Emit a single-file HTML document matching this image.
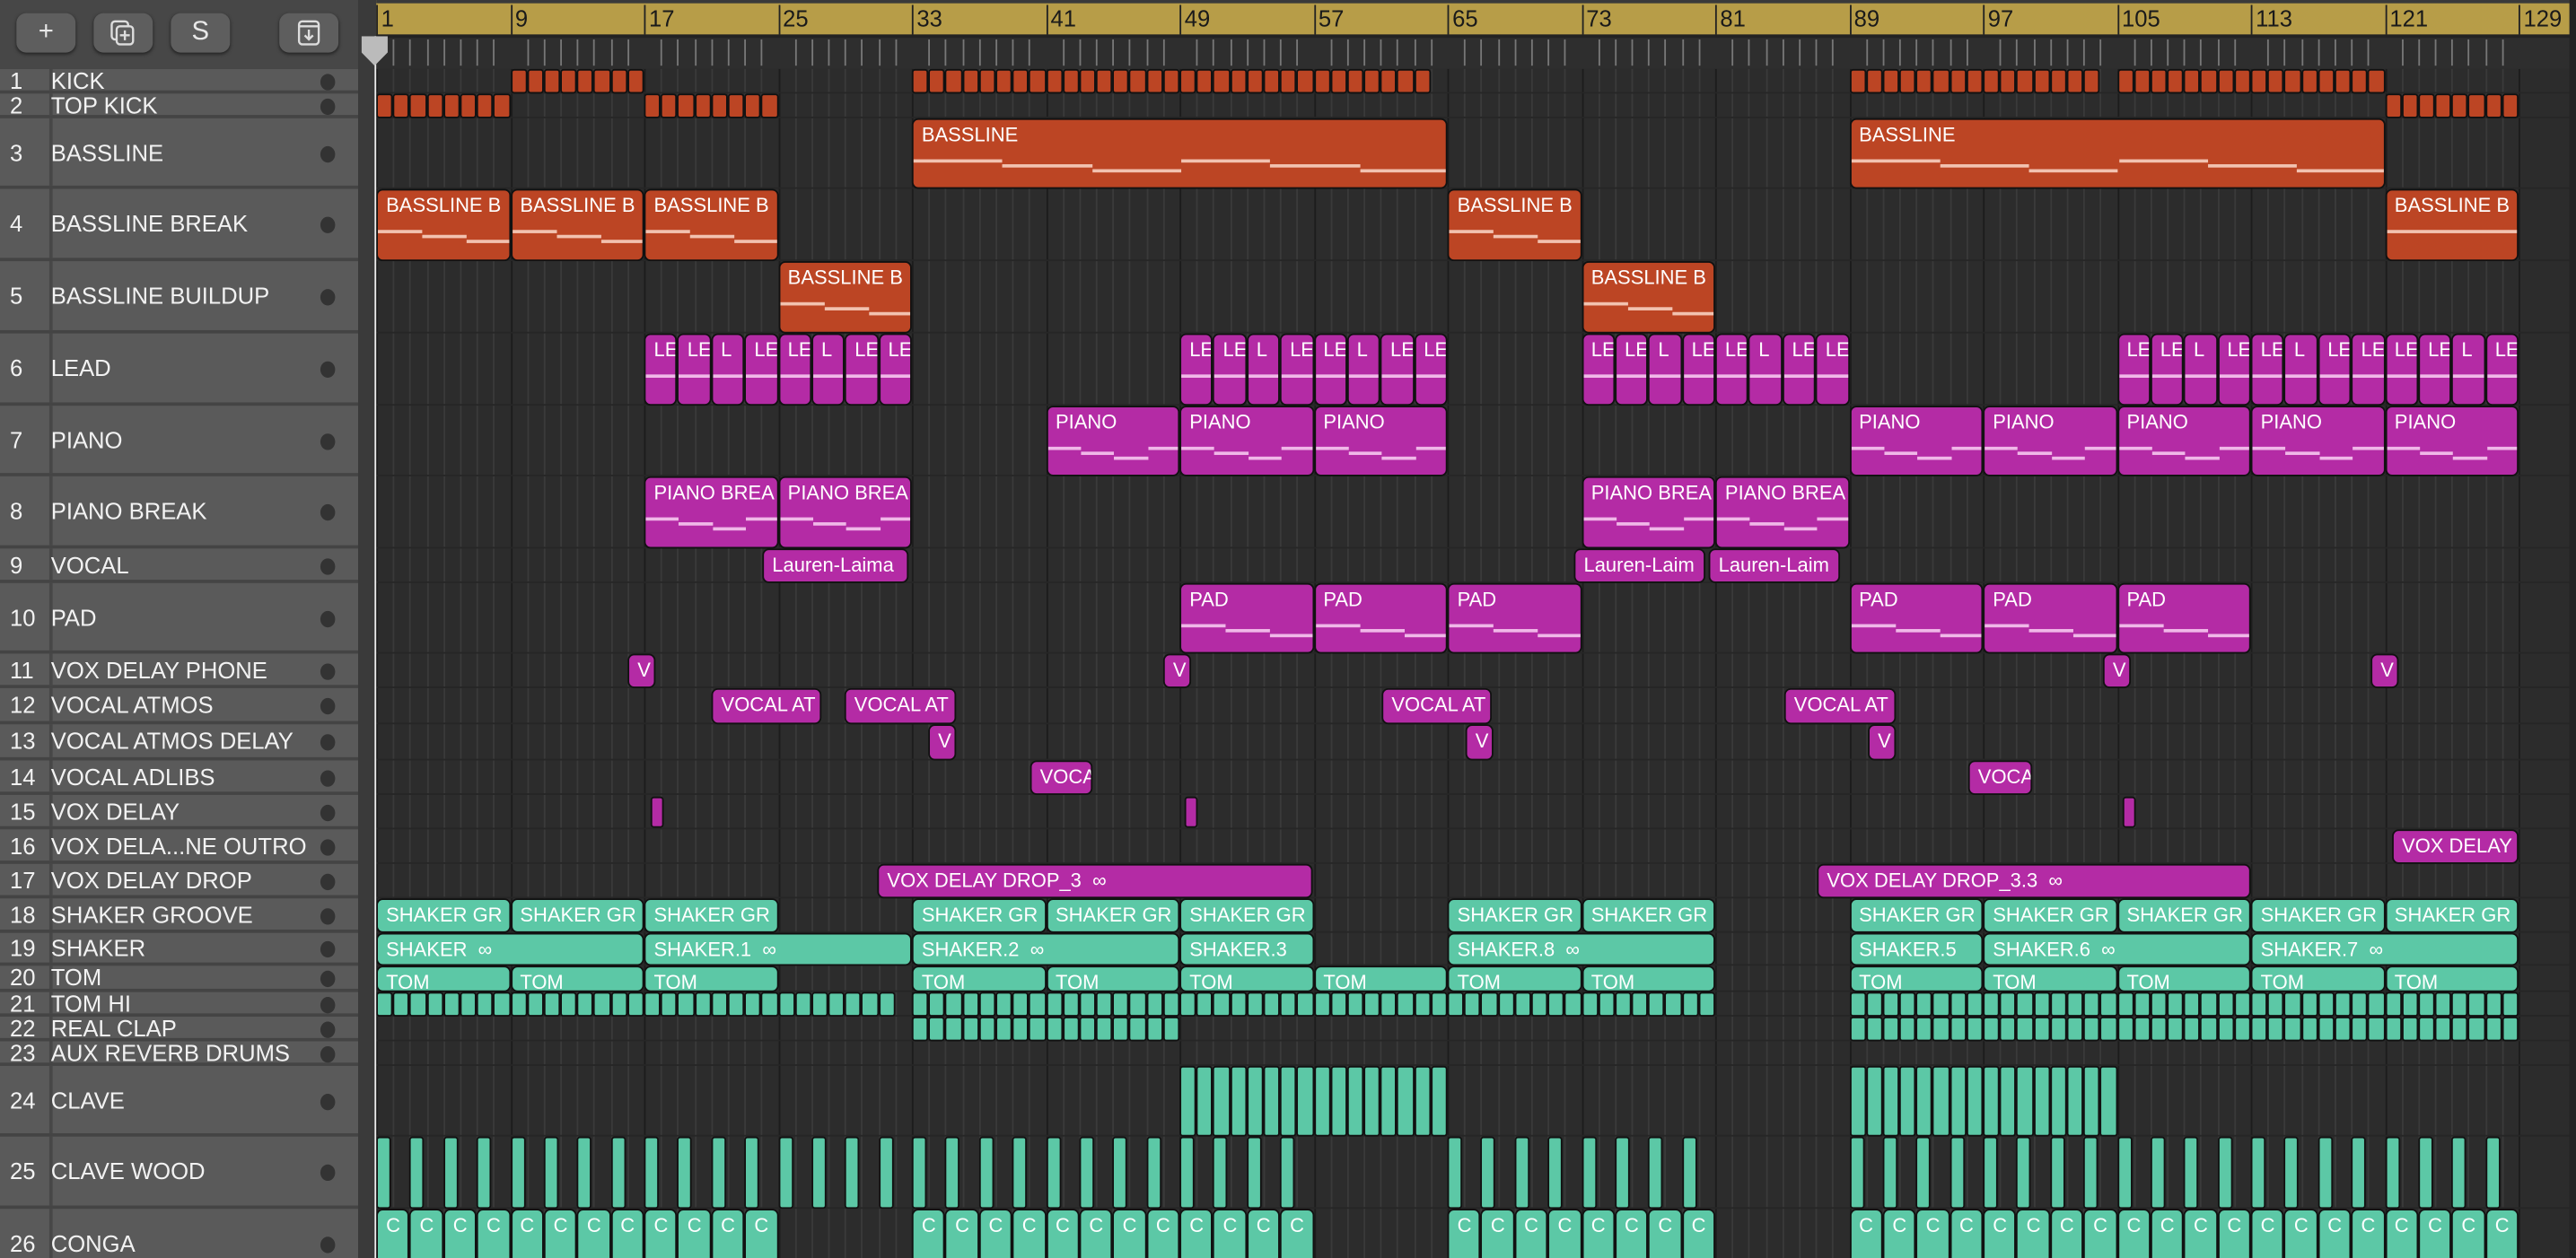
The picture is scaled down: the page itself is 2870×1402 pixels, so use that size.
<!DOCTYPE html>
<html><head><meta charset="utf-8">
<style>
html,body{margin:0;padding:0;width:2870px;height:1402px;overflow:hidden;background:#2b2b2b}
#s{position:absolute;left:0;top:0;width:1568px;height:766px;transform:scale(1.8304);transform-origin:0 0;font-family:"Liberation Sans",sans-serif;overflow:hidden;background:#2c2c2c}
.abs{position:absolute}
.btn{position:absolute;top:8px;width:36px;height:24px;border-radius:6px;background:#5e5e5e;box-shadow:0 1px 2px #222;color:#e8e8e8;text-align:center;font-size:16px;line-height:24px}
.trk{position:absolute;left:0;width:218px;background:#5a5a5a;border-bottom:2px solid #444;box-sizing:border-box;color:#f2f2f2;font-size:14px}
.trk .n{position:absolute;left:6px}
.trk .t{position:absolute;left:31px}
.trk .d{position:absolute;left:195px;width:9px;height:10px;border-radius:50%;background:#333}
.r{position:absolute;box-sizing:border-box;border:1px solid #111;border-radius:4px;color:#fff;font-size:12px;overflow:hidden;white-space:nowrap;padding:2px 0 0 5px;line-height:14px}
.o{background:#bc4524}.m{background:#b42ba5}.g{background:#5cc8a6}
.nl{position:absolute;height:2px}
</style></head><body><div id="s">
<div class="abs" style="left:0;top:0;width:220px;height:42px;background:#474747"></div>
<div class="btn" style="left:10px">+</div>
<div class="btn" style="left:57px"><svg width="20" height="18" viewBox="0 0 20 18" style="margin-top:3px"><rect x="3" y="2" width="10" height="11" rx="2" fill="none" stroke="#ddd" stroke-width="1.3"/><rect x="6" y="5" width="10" height="11" rx="2" fill="#5e5e5e" stroke="#ddd" stroke-width="1.3"/><path d="M11 7.5v6M8 10.5h6" stroke="#ddd" stroke-width="1.3"/></svg></div>
<div class="btn" style="left:104px">S</div>
<div class="btn" style="left:170px"><svg width="18" height="18" viewBox="0 0 18 18" style="margin-top:3px"><rect x="3" y="2" width="12" height="14" rx="2" fill="none" stroke="#ddd" stroke-width="1.3"/><path d="M3 5h12M9 7v6M6.5 10.5L9 13l2.5-2.5" fill="none" stroke="#ddd" stroke-width="1.3"/></svg></div>
<div class="abs" style="left:218px;top:0;width:11px;height:766px;background:#3a3a3a"></div>
<div class="abs" style="left:229px;top:0;width:1335px;height:21px;background:#b79d48;border-top:2px solid #3a3a3a;box-sizing:border-box"></div>
<div class="abs" style="left:229px;top:21px;width:1335px;height:21px;background:#2e2e2e;border-top:2px solid #222;box-sizing:border-box"></div>
<div class="abs" style="left:1564px;top:0;width:4px;height:766px;background:#222"></div>
<div id="g"></div>
<div class="abs" style="left:228px;top:22px;width:1px;height:744px;background:#eee"></div>
<div class="abs" style="left:220px;top:22px;width:16px;height:18px;background:#bbb;clip-path:polygon(0 0,100% 0,100% 55%,50% 100%,0 55%)"></div>
</div>
<script>
var s=document.getElementById('s'),h='';
function X(b){return 229+(b-1)*10.1875}
var rows=[[42,57,'KICK'],[57,72,'TOP KICK'],[72,115,'BASSLINE'],[115,159,'BASSLINE BREAK'],[159,203,'BASSLINE BUILDUP'],[203,247,'LEAD'],[247,290,'PIANO'],[290,334,'PIANO BREAK'],[334,355,'VOCAL'],[355,398,'PAD'],[398,419,'VOX DELAY PHONE'],[419,441,'VOCAL ATMOS'],[441,463,'VOCAL ATMOS DELAY'],[463,484,'VOCAL ADLIBS'],[484,505,'VOX DELAY'],[505,526,'VOX DELA...NE OUTRO'],[526,547,'VOX DELAY DROP'],[547,568,'SHAKER GROOVE'],[568,588,'SHAKER'],[588,604,'TOM'],[604,619,'TOM HI'],[619,634,'REAL CLAP'],[634,649,'AUX REVERB DRUMS'],[649,692,'CLAVE'],[692,736,'CLAVE WOOD'],[736,780,'CONGA']];
for(var b=1;b<=129;b++){var x=X(b);var c=(b-1)%8==0?'#1c1c1c':'#3a3a3a';
h+='<div class="abs" style="left:'+x+'px;top:42px;width:1px;height:724px;background:'+c+'"></div>';
h+='<div class="abs" style="left:'+x+'px;top:'+((b-1)%8==0?3:24)+'px;width:1px;height:'+((b-1)%8==0?18:16)+'px;background:'+((b-1)%8==0?'#222':'#777')+'"></div>';
if((b-1)%8==0)h+='<div class="abs" style="left:'+(x+3)+'px;top:3px;font-size:14px;color:#1a1a1a">'+b+'</div>';}
rows.forEach(function(r,i){var y=r[0],hh=r[1]-r[0];
h+='<div class="abs" style="left:229px;top:'+(r[1]-1)+'px;width:1335px;height:1px;background:#262626"></div>';
h+='<div class="trk" style="top:'+y+'px;height:'+hh+'px"><div class="abs" style="left:30px;top:0;width:2px;height:100%;background:#474747"></div><span class="n" style="top:'+(hh/2-9)+'px">'+(i+1)+'</span><span class="t" style="top:'+(hh/2-9)+'px">'+r[2]+'</span><span class="d" style="top:'+(hh/2-5)+'px"></span></div>';});
function R(t,x1,x2,cl,lab,notes){var r=rows[t-1];var w=x2-x1;
var o='<div class="r '+cl+'" style="left:'+x1+'px;top:'+r[0]+'px;width:'+w+'px;height:'+(r[1]-r[0])+'px'+(w<14?';border-radius:2px;padding:0':'')+'">'+(lab||'');
if(notes){var nc=cl=='o'?'#f2c2b0':'#f0b8e8';var hh=r[1]-r[0];for(var k=0;k<notes;k++){var nx=k*w/notes,nw=w/notes;o+='<div class="nl" style="left:'+nx+'px;width:'+nw+'px;top:'+(hh*0.62+((k*7)%3)*3-3)+'px;background:'+nc+'"></div>';}}
o+='</div>';h+=o;}
function B(t,b1,b2,cl,lab,n,notes){var step=(b2-b1)/n;for(var k=0;k<n;k++){var l=typeof lab=='object'?lab[k%lab.length]:lab;R(t,X(b1+k*step),X(b1+(k+1)*step),cl,l,notes);}}
B(1,9,17,'o','',8);B(1,33,49,'o','',16);B(1,49,64,'o','',15);B(1,89,104,'o','',15);B(1,105,121,'o','',16);
B(2,1,9,'o','',8);B(2,17,25,'o','',8);B(2,121,129,'o','',8);
R(3,X(33),X(65),'o','BASSLINE',6);R(3,X(89),X(121),'o','BASSLINE',6);
B(4,1,25,'o','BASSLINE B',3,3);R(4,X(65),X(73),'o','BASSLINE B',3);R(4,X(121),X(129),'o','BASSLINE B',1);
R(5,X(25),X(33),'o','BASSLINE B',3);R(5,X(73),X(81),'o','BASSLINE B',3);
var le=['LE','LE','L','LE','LE','L','LE','LE'];
B(6,17,33,'m',le,8,1);B(6,49,65,'m',le,8,1);B(6,73,89,'m',le,8,1);B(6,105,129,'m',le,12,1);
B(7,41,65,'m','PIANO',3,4);B(7,89,129,'m','PIANO',5,4);
B(8,17,33,'m','PIANO BREA',2,4);B(8,73,89,'m','PIANO BREA',2,4);
R(9,464,553,'m','Lauren-Laima');R(9,958,1038,'m','Lauren-Laim');R(9,1040,1120,'m','Lauren-Laim');
B(10,49,73,'m','PAD',3,3);B(10,89,113,'m','PAD',3,3);
[382,708,1280,1443].forEach(function(x){R(11,x,x+17,'m','V')});
[[433,500],[514,582],[841,908],[1086,1154]].forEach(function(a){R(12,a[0],a[1],'m','VOCAL AT')});
[565,892,1137].forEach(function(x){R(13,x,x+17,'m','V')});
R(14,627,665,'m','VOCA');R(14,1198,1237,'m','VOCA');
[396,721,1292].forEach(function(x){var r=rows[14];h+='<div class="r m" style="left:'+x+'px;top:'+(r[0]+1)+'px;width:8px;height:19px;padding:0;border-radius:2px"></div>'});
R(16,1456,1533,'m','VOX DELAY');
R(17,534,799,'m','VOX DELAY DROP_3 &nbsp;&#x221E;');R(17,1106,1370,'m','VOX DELAY DROP_3.3 &nbsp;&#x221E;');
B(18,1,25,'g','SHAKER GR',3);B(18,33,57,'g','SHAKER GR',3);B(18,65,81,'g','SHAKER GR',2);B(18,89,129,'g','SHAKER GR',5);
R(19,X(1),X(17),'g','SHAKER &nbsp;&#x221E;');R(19,X(17),X(33),'g','SHAKER.1 &nbsp;&#x221E;');R(19,X(33),X(49),'g','SHAKER.2 &nbsp;&#x221E;');R(19,X(49),X(57),'g','SHAKER.3');R(19,X(65),X(81),'g','SHAKER.8 &nbsp;&#x221E;');R(19,X(89),X(97),'g','SHAKER.5');R(19,X(97),X(113),'g','SHAKER.6 &nbsp;&#x221E;');R(19,X(113),X(129),'g','SHAKER.7 &nbsp;&#x221E;');
B(20,1,25,'g','TOM',3);B(20,33,65,'g','TOM',4);B(20,65,81,'g','TOM',2);B(20,89,129,'g','TOM',5);
B(21,1,32,'g','',31);B(21,33,81,'g','',48);B(21,89,129,'g','',40);
B(22,33,49,'g','',16);B(22,89,129,'g','',40);
B(24,49,65,'g','',16);B(24,89,105,'g','',16);
function CW(b1,b2){for(var b=b1;b<b2;b+=2){var x=X(b);var r=rows[24];h+='<div class="r g" style="left:'+x+'px;top:'+r[0]+'px;width:9px;height:'+(r[1]-r[0])+'px;padding:0;border-radius:2px"></div>'}}
CW(1,57);CW(65,81);CW(89,129);
B(26,1,25,'g','C',12);B(26,33,57,'g','C',12);B(26,65,81,'g','C',8);B(26,89,129,'g','C',20);
document.getElementById('g').innerHTML=h;
</script>
</body></html>
